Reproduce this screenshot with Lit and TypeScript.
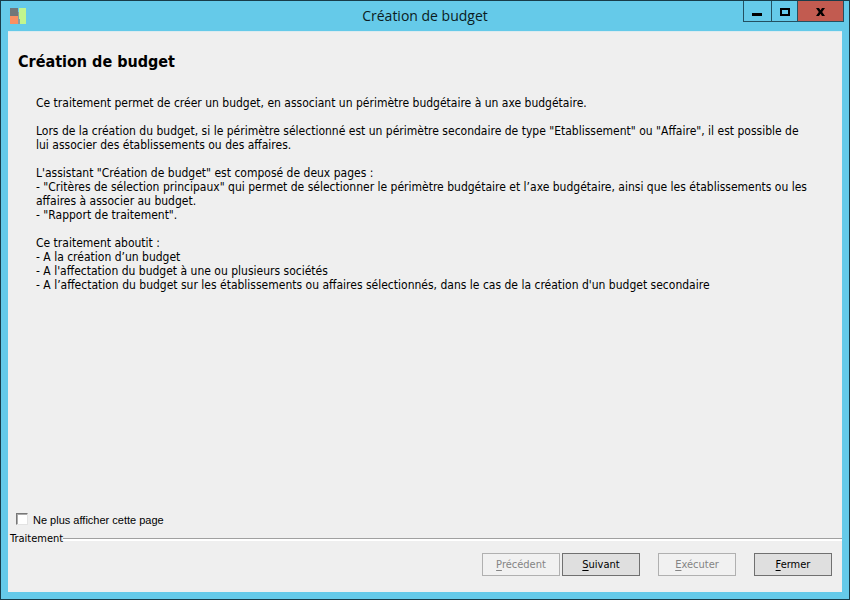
import { LitElement, html, css } from "lit";
import { customElement } from "lit/decorators.js";

@customElement("app-root")
export class AppRoot extends LitElement {
  static styles = css`
    * { box-sizing: border-box; }
    :host {
      display: flex;
      flex-direction: column;
      min-height: 100vh;
      box-sizing: border-box;
      border: 1px solid #183c49;
      padding: 0 7px 7px;
      background: #65cae9;
      color: #000;
      font: 11px/14px "DejaVu Sans Condensed", "DejaVu Sans", sans-serif;
    }
    .titlebar {
      position: relative;
      height: 30px;
      display: flex;
      align-items: center;
      justify-content: center;
      flex: none;
    }
    .logo { position: absolute; left: 2px; top: 6px; }
    .title {
      margin: 0;
      font: 14px/20px "Open Sans", "Noto Sans", sans-serif;
      color: #0b1c22;
    }
    .controls {
      position: absolute;
      top: 0;
      right: -2px;
      display: flex;
      border: 1px solid #235061;
      border-top: 0;
    }
    .control {
      display: block;
      width: 28px;
      height: 20px;
      padding: 0;
      border: 0;
      border-right: 1px solid #235061;
      background: none;
    }
    .control.zoom { width: 26px; }
    .control.close { width: 45px; border-right: 0; background: #c25b50; }
    .control svg { display: block; margin: 0 auto; }
    .page {
      flex: 1;
      display: flex;
      flex-direction: column;
      background: #efefef;
      border-top: 1px solid #dcebf0;
    }
    .heading {
      margin: 18px 0 0 10px;
      font: bold 16px/24px "DejaVu Sans Condensed", "DejaVu Sans", sans-serif;
    }
    .text {
      display: flex;
      flex-direction: column;
      gap: 14px;
      margin: 22px 30px 0 28px;
      font-size: 12px;
    }
    .text p { margin: 0; }
    .skip {
      display: flex;
      align-items: center;
      gap: 5px;
      margin: auto auto 0 8px;
      height: 14px;
      font: 11px/14px "Liberation Sans", sans-serif;
    }
    .check {
      appearance: none;
      width: 12px;
      height: 12px;
      margin: 0 0 2px;
      background: #fff;
      border: 1px solid;
      border-color: #777 #e3e3e3 #e3e3e3 #777;
      box-shadow: inset 1px 1px #aaa;
    }
    .actions {
      margin: 5px 0 0;
      padding: 7px 10px 16px;
      border: 0;
      min-width: 0;
    }
    .caption {
      display: flex;
      align-items: center;
      width: calc(100% + 20px);
      margin: 0 -10px;
      padding: 0 0 0 2px;
      line-height: 14px;
    }
    .caption::after {
      content: "";
      flex: 1;
      height: 2px;
      border-top: 1px solid #a0a0a0;
      background: #fff;
    }
    .row { display: flex; justify-content: flex-end; gap: 18px; }
    .pair { display: flex; gap: 2px; }
    .button {
      width: 78px;
      height: 23px;
      padding: 0;
      border: 1px solid #707070;
      background: #dfdfdf;
      color: #000;
      font: inherit;
    }
    .button:disabled { border-color: #b0b0b0; background: #f1f1f1; color: #848484; }
    u { text-underline-offset: 2px; }
  `;

  render() {
    return html`
      <header class="titlebar">
        <svg class="logo" width="17" height="17" viewBox="0 0 17 17" aria-hidden="true">
          <path fill="#717779" d="M0 1h8v8H0z" />
          <path fill="#f98f62" d="M0 9h8v8H0z" />
          <path fill="#c1f58e" d="M9 1h7v16h-6v-5H9z" />
          <path fill="#8a9b9d" d="M8 5h1v7h1v5H8z" />
        </svg>
        <p class="title">Création de budget</p>
        <div class="controls">
          <button class="control" aria-label="Réduire">
            <svg width="12" height="12" viewBox="0 0 12 12"><path d="M0 8h10v3H0z" /></svg>
          </button>
          <button class="control zoom" aria-label="Agrandir">
            <svg width="12" height="12" viewBox="0 0 12 12"><path fill="none" stroke="#000" stroke-width="2" d="M2 4h8v6H2z" /></svg>
          </button>
          <button class="control close" aria-label="Fermer la fenêtre">
            <svg width="12" height="12" viewBox="0 0 12 12"><path d="M1 3h3l1.5 2.3L7 3h3L7.2 7 10 11H7L5.500 8.700 4 11H1l2.800-4z" /></svg>
          </button>
        </div>
      </header>
      <main class="page">
        <h1 class="heading">Création de budget</h1>
        <div class="text">
          <p>Ce traitement permet de créer un budget, en associant un périmètre budgétaire à un axe budgétaire.</p>
          <p>Lors de la création du budget, si le périmètre sélectionné est un périmètre secondaire de type "Etablissement" ou "Affaire", il est possible de lui associer des établissements ou des affaires.</p>
          <p>
            L'assistant "Création de budget" est composé de deux pages :<br />
            - "Critères de sélection principaux" qui permet de sélectionner le périmètre budgétaire et l’axe budgétaire, ainsi que les établissements ou les affaires à associer au budget.<br />
            - "Rapport de traitement".
          </p>
          <p>
            Ce traitement aboutit :<br />
            - A la création d’un budget<br />
            - A l'affectation du budget à une ou plusieurs sociétés<br />
            - A l’affectation du budget sur les établissements ou affaires sélectionnés, dans le cas de la création d'un budget secondaire
          </p>
        </div>
        <label class="skip"><input class="check" type="checkbox" />Ne plus afficher cette page</label>
        <fieldset class="actions">
          <legend class="caption">Traitement</legend>
          <div class="row">
            <div class="pair">
              <button class="button" disabled><u>P</u>récédent</button>
              <button class="button"><u>S</u>uivant</button>
            </div>
            <button class="button" disabled><u>E</u>xécuter</button>
            <button class="button"><u>F</u>ermer</button>
          </div>
        </fieldset>
      </main>
    `;
  }
}
